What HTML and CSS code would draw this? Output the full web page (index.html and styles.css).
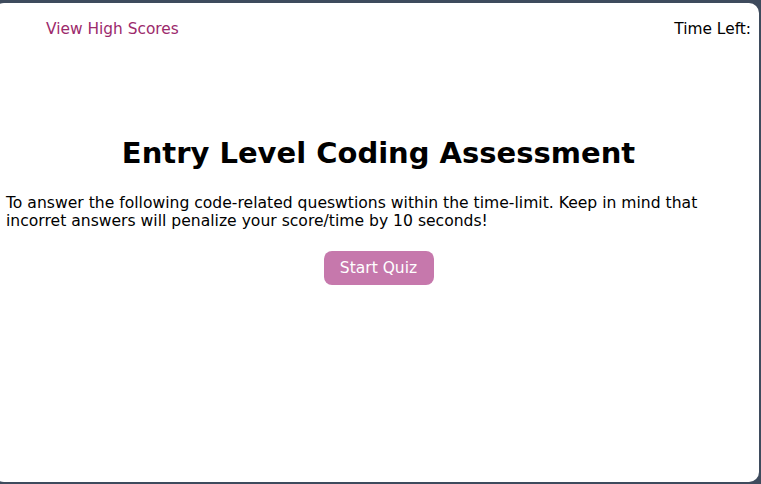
FILE: index.html
```html
<!DOCTYPE html>
<html lang="en">
<head>
<meta charset="utf-8">
<title>Coding Quiz</title>
<link rel="stylesheet" href="styles.css">
</head>
<body>
<div class="page">
  <header class="topbar">
    <a class="scores" href="#">View High Scores</a>
    <span class="timer">Time Left:</span>
  </header>
  <main class="intro">
    <h1 class="title">Entry Level Coding Assessment</h1>
    <p class="lead">To answer the following code-related queswtions within the time-limit. Keep in mind that incorret answers will penalize your score/time by 10 seconds!</p>
    <button class="start" type="button">Start Quiz</button>
  </main>
</div>
</body>
</html>
```
FILE: styles.css
```css
html, body {
  margin: 0;
  padding: 0;
  height: 100%;
}
body {
  background: #3e4b5d;
  font-family: "DejaVu Sans", Verdana, sans-serif;
  color: #000;
  overflow: hidden;
}
.page {
  box-sizing: border-box;
  margin: 3px 2px 0 -6px;
  height: 479px;
  background: #fff;
  border-radius: 10px;
  padding: 0 8px 0 12px;
}
.topbar {
  display: flex;
  justify-content: space-between;
  align-items: center;
  padding: 17px 0 0 40px;
  font-size: 15.4px;
}
.scores {
  color: #9c2a6c;
  text-decoration: none;
}
.timer {
  color: #000;
}
.intro {
  display: flex;
  flex-direction: column;
  align-items: center;
  padding-top: 98px;
}
.title {
  margin: 0;
  font-size: 29px;
  font-weight: bold;
  text-align: center;
}
.lead {
  align-self: stretch;
  margin: 24px 0 0;
  font-size: 15.6px;
  line-height: 18px;
}
.start {
  margin-top: 21px;
  width: 110px;
  height: 34px;
  border: none;
  border-radius: 8px;
  background: #c678ac;
  color: #fff;
  font-family: "DejaVu Sans", Verdana, sans-serif;
  font-size: 15.5px;
  padding: 0;
}
```
